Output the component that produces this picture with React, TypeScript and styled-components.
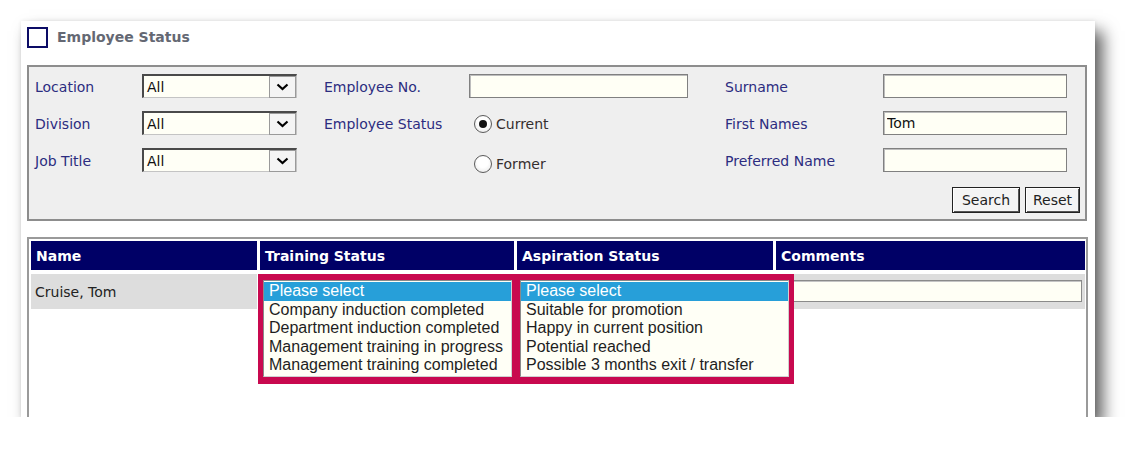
import styled, { createGlobalStyle } from 'styled-components'
import { FC } from 'react'

const GlobalStyle = createGlobalStyle`
    html, body {
        margin: 0;
        padding: 0;
        background: #fff;
    }
    body {
        font-family: 'DejaVu Sans', Verdana, sans-serif;
        font-size: 14px;
    }
`

const Page = styled.div`
    padding: 21px 0 0 21px;
`

const Card = styled.div`
    width: 1074px;
    height: 396px;
    box-sizing: border-box;
    padding: 6px 0 0 6px;
    background: #fff;
    overflow: hidden;
    box-shadow: 8px 10px 15px rgba(0, 0, 0, 0.62), 0 0 4px rgba(0, 0, 0, 0.08);
`

const TitleRow = styled.div`
    display: flex;
    align-items: center;
    height: 21px;
    margin-bottom: 17px;
`

const TitleBox = styled.span`
    width: 21px;
    height: 21px;
    box-sizing: border-box;
    border: 2.5px solid #0c0c66;
    background: #fff;
`

const Title = styled.h1`
    margin: 0 0 0 9px;
    font-size: 14px;
    font-weight: bold;
    color: #646873;
    line-height: 21px;
`

const FilterPanel = styled.section`
    width: 1060px;
    box-sizing: border-box;
    border: 2px solid #8d8d8d;
    background: #efefef;
    padding: 7px 5px 6px 6px;
`

const FilterGrid = styled.div`
    display: grid;
    grid-template-columns: 107px 182px 145px 256px 158px 184px;
    grid-auto-rows: 24px;
    row-gap: 13px;
    align-items: center;
`

const Label = styled.label`
    color: #2c2c80;
    font-size: 14px;
    white-space: nowrap;
    padding-top: 1px;
`

const SelectBox = styled.div`
    position: relative;
    width: 155px;
    height: 24px;
    box-sizing: border-box;
    border-top: 2px solid #4a4a4a;
    border-left: 2px solid #4a4a4a;
    border-right: 1px solid #c4c4c4;
    border-bottom: 1px solid #c4c4c4;
    background: #fffff6;
    display: flex;
    align-items: center;
    justify-content: space-between;
    padding-left: 3px;
    color: #111;
`

const SelectButton = styled.span`
    width: 27px;
    height: 22px;
    box-sizing: border-box;
    border: 1px solid #9a9a9a;
    background: #f4f4f4;
    display: flex;
    align-items: center;
    justify-content: center;
`

const Select: FC<{ value: string }> = ({ value }) => (
    <SelectBox>
        <span>{value}</span>
        <SelectButton>
            <svg width="13" height="8" viewBox="0 0 13 8">
                <polyline points="1.5,1.5 6.5,6 11.5,1.5" fill="none" stroke="#000" strokeWidth="2.2" />
            </svg>
        </SelectButton>
    </SelectBox>
)

const TextInput = styled.input<{ $w: number }>`
    width: ${({ $w }) => $w}px;
    height: 24px;
    box-sizing: border-box;
    border: 1px solid #808080;
    box-shadow: inset 1px 1px 0 #bdbdbd;
    background: #fffff5;
    font-family: 'DejaVu Sans', Verdana, sans-serif;
    font-size: 14px;
    color: #111;
    padding: 0 3px;
    margin: 0;
    outline: none;
`

const RadioItem = styled.div<{ $offset: number }>`
    display: flex;
    align-items: center;
    gap: 4px;
    align-self: start;
    margin-top: ${({ $offset }) => $offset}px;
    margin-left: 5px;
    color: #352e2e;
    font-size: 14px;
`

const RadioDot = styled.span<{ $checked?: boolean }>`
    width: 18px;
    height: 18px;
    box-sizing: border-box;
    border-radius: 50%;
    border: 1px solid #5a5a5a;
    background: radial-gradient(circle at 50% 40%, #ffffff 40%, #e4e4e4 100%);
    display: flex;
    align-items: center;
    justify-content: center;

    &::after {
        content: '';
        width: 8px;
        height: 8px;
        border-radius: 50%;
        background: #111;
        display: ${({ $checked }) => ($checked ? 'block' : 'none')};
    }
`

const ButtonRow = styled.div`
    display: flex;
    justify-content: flex-end;
    gap: 5px;
    margin-top: 15px;
`

const Button = styled.button<{ $w: number }>`
    width: ${({ $w }) => $w}px;
    height: 26px;
    box-sizing: border-box;
    border: 1px solid #222;
    box-shadow: inset 1px 1px 0 #fff, inset -1px -1px 0 #555;
    background: #f4f4f4;
    font-family: 'DejaVu Sans', Verdana, sans-serif;
    font-size: 14px;
    color: #222;
    padding: 0;
    margin: 0;
`

const TablePanel = styled.section`
    width: 1061px;
    height: 220px;
    margin-top: 16px;
    box-sizing: border-box;
    border: 2px solid #9a9a9a;
    border-bottom: none;
    padding: 2px 1px 0 2px;
    background: #fff;
`

const Grid = styled.div`
    display: grid;
    grid-template-columns: 226px 254px 256px 1fr;
    grid-template-rows: 29px 35px;
    column-gap: 3px;
    row-gap: 4px;
`

const HeadCell = styled.div`
    background: #000066;
    color: #fff;
    font-weight: bold;
    font-size: 14px;
    display: flex;
    align-items: center;
    padding-left: 5px;
`

const Cell = styled.div`
    position: relative;
    background: #dddddd;
    color: #222;
    font-size: 14px;
    display: flex;
    align-items: center;
    padding-left: 4px;
`

const ListBox = styled.ul<{ $w: number }>`
    position: absolute;
    z-index: 2;
    top: 6px;
    left: 3px;
    width: ${({ $w }) => $w}px;
    height: 97px;
    box-sizing: border-box;
    margin: 0;
    padding: 1px 0;
    list-style: none;
    border-top: 1px solid #8a8a8a;
    border-left: 1px solid #8a8a8a;
    border-right: 1px solid #d0d0d0;
    border-bottom: 1px solid #d0d0d0;
    background: #fffff6;
    box-shadow: 0 0 0 5px #c8094f, 0 -1px 0 5px #c8094f, 0 2px 0 5px #c8094f;
    font-family: 'Liberation Sans', Arial, sans-serif;
    font-size: 16px;
    line-height: 18.6px;
    color: #1e1e1e;
`

const Option = styled.li<{ $selected?: boolean }>`
    padding-left: 5px;
    white-space: nowrap;
    background: ${({ $selected }) => ($selected ? '#279fd9' : 'transparent')};
    color: ${({ $selected }) => ($selected ? '#fff' : 'inherit')};
`

const CommentInput = styled.input`
    position: absolute;
    top: 6px;
    left: 3px;
    width: calc(100% - 6px);
    height: 22px;
    box-sizing: border-box;
    border: 1px solid #8a8a8a;
    box-shadow: inset 1px 1px 0 #c4c4c4;
    background: #fffff5;
    margin: 0;
    outline: none;
`

const training = [
    'Please select',
    'Company induction completed',
    'Department induction completed',
    'Management training in progress',
    'Management training completed',
]

const aspiration = [
    'Please select',
    'Suitable for promotion',
    'Happy in current position',
    'Potential reached',
    'Possible 3 months exit / transfer',
]

const App = () => (
    <>
        <GlobalStyle />
        <Page>
            <Card>
                <TitleRow>
                    <TitleBox />
                    <Title>Employee Status</Title>
                </TitleRow>

                <FilterPanel>
                    <FilterGrid>
                        <Label>Location</Label>
                        <Select value="All" />
                        <Label>Employee No.</Label>
                        <TextInput $w={219} readOnly value="" />
                        <Label>Surname</Label>
                        <TextInput $w={184} readOnly value="" />

                        <Label>Division</Label>
                        <Select value="All" />
                        <Label>Employee Status</Label>
                        <RadioItem $offset={4}>
                            <RadioDot $checked />
                            Current
                        </RadioItem>
                        <Label>First Names</Label>
                        <TextInput $w={184} readOnly value="Tom" />

                        <Label>Job Title</Label>
                        <Select value="All" />
                        <span />
                        <RadioItem $offset={7}>
                            <RadioDot />
                            Former
                        </RadioItem>
                        <Label>Preferred Name</Label>
                        <TextInput $w={184} readOnly value="" />
                    </FilterGrid>
                    <ButtonRow>
                        <Button $w={68}>Search</Button>
                        <Button $w={55}>Reset</Button>
                    </ButtonRow>
                </FilterPanel>

                <TablePanel>
                    <Grid>
                        <HeadCell>Name</HeadCell>
                        <HeadCell>Training Status</HeadCell>
                        <HeadCell>Aspiration Status</HeadCell>
                        <HeadCell>Comments</HeadCell>

                        <Cell>Cruise, Tom</Cell>
                        <Cell>
                            <ListBox $w={249}>
                                {training.map((t, i) => (
                                    <Option key={t} $selected={i === 0}>{t}</Option>
                                ))}
                            </ListBox>
                        </Cell>
                        <Cell>
                            <ListBox $w={269}>
                                {aspiration.map((t, i) => (
                                    <Option key={t} $selected={i === 0}>{t}</Option>
                                ))}
                            </ListBox>
                        </Cell>
                        <Cell>
                            <CommentInput readOnly value="" />
                        </Cell>
                    </Grid>
                </TablePanel>
            </Card>
        </Page>
    </>
)

export default App
